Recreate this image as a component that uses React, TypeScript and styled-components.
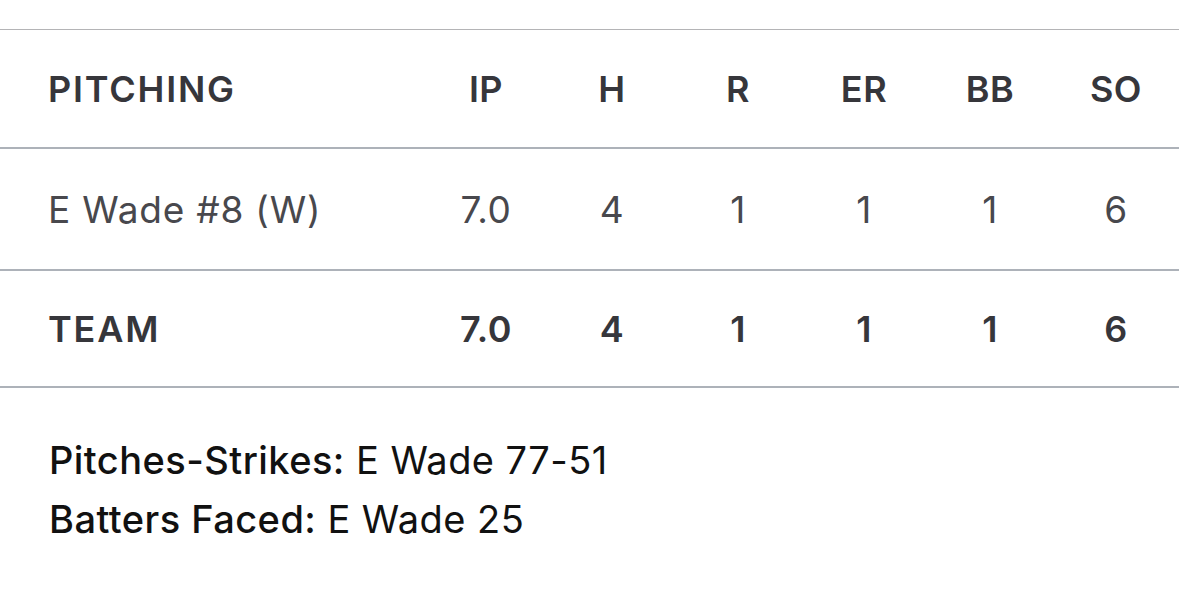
import React from 'react';
import styled, { createGlobalStyle } from 'styled-components';

const GlobalStyle = createGlobalStyle`
  html, body {
    margin: 0;
    padding: 0;
    background: #ffffff;
  }
  body {
    font-family: 'Inter', 'Liberation Sans', sans-serif;
  }
`;

const Page = styled.div`
  width: 1179px;
  height: 592px;
  background: #fff;
  padding-top: 29px;
  box-sizing: border-box;
`;

const Table = styled.div`
  border-top: 1px solid #b4b4b6;
`;

const Row = styled.div<{ height: number }>`
  display: grid;
  grid-template-columns: 423px repeat(6, 126px);
  align-items: center;
  height: ${props => props.height}px;
  border-bottom: 2px solid #adb2b9;
  color: #36363b;
`;

// header + team rows are semibold and tracked out, player rows regular
const NameCell = styled.div<{ bold?: boolean }>`
  padding-left: 48px;
  font-size: ${props => (props.bold ? 36 : 37)}px;
  letter-spacing: ${props => (props.bold ? 1.8 : 0.8)}px;
  font-weight: ${props => (props.bold ? 600 : 400)};
  color: ${props => (props.bold ? '#36363b' : '#48484d')};
`;

const StatCell = styled.div<{ bold?: boolean }>`
  text-align: center;
  font-size: ${props => (props.bold ? 36 : 37)}px;
  letter-spacing: 0.5px;
  font-weight: ${props => (props.bold ? 600 : 400)};
  color: ${props => (props.bold ? '#36363b' : '#48484d')};
`;

const Notes = styled.div`
  padding: 49px 0 0 49px;
  display: flex;
  flex-direction: column;
  gap: 13px;
  color: #111;
  font-size: 38px;
  letter-spacing: 0.45px;
  line-height: 46px;
`;

const NoteLabel = styled.span`
  font-weight: 500;
`;

const headers = ['IP', 'H', 'R', 'ER', 'BB', 'SO'];
const pitcher = ['7.0', '4', '1', '1', '1', '6'];
const team = ['7.0', '4', '1', '1', '1', '6'];

export default function App() {
  return (
    <Page>
      <GlobalStyle />
      <Table>
        <Row height={117}>
          <NameCell bold>PITCHING</NameCell>
          {headers.map(h => (
            <StatCell bold key={h}>{h}</StatCell>
          ))}
        </Row>
        <Row height={120}>
          <NameCell>E Wade #8 (W)</NameCell>
          {pitcher.map((v, i) => (
            <StatCell key={i}>{v}</StatCell>
          ))}
        </Row>
        <Row height={115}>
          <NameCell bold>TEAM</NameCell>
          {team.map((v, i) => (
            <StatCell bold key={i}>{v}</StatCell>
          ))}
        </Row>
      </Table>
      <Notes>
        <div><NoteLabel>Pitches-Strikes:</NoteLabel> E Wade 77-51</div>
        <div><NoteLabel>Batters Faced:</NoteLabel> E Wade 25</div>
      </Notes>
    </Page>
  );
}
